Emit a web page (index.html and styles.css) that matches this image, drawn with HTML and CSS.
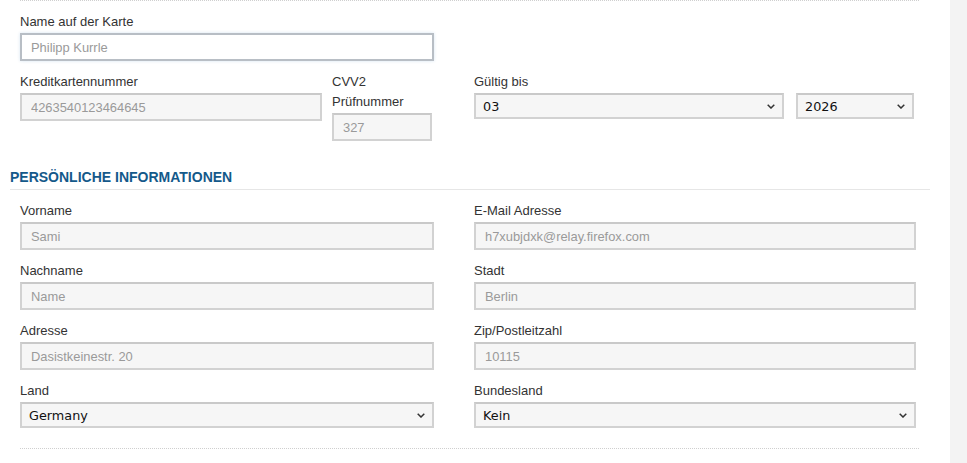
FILE: index.html
```html
<!DOCTYPE html>
<html lang="de">
<head>
<meta charset="utf-8">
<title>Zahlung</title>
<link rel="stylesheet" href="styles.css">
</head>
<body>
<div class="page">
  <main class="content">
    <section class="card-block">
      <div class="grid">
        <div class="field">
          <label class="label">Name auf der Karte</label>
          <input class="input input-focus" type="text" value="Philipp Kurrle">
        </div>
        <div></div>
        <div class="pair">
          <div class="field card-num">
            <label class="label">Kreditkartennummer</label>
            <input class="input input-ro" type="text" value="4263540123464645" readonly>
          </div>
          <div class="field cvv">
            <label class="label">CVV2 Prüfnummer</label>
            <input class="input input-ro" type="text" value="327" readonly>
          </div>
        </div>
        <div class="field">
          <label class="label">Gültig bis</label>
          <div class="selects">
            <div class="select-wrap month">
              <select class="select"><option>03</option></select>
              <svg class="chev" viewBox="0 0 8 5" width="8" height="5"><path d="M0.7 0.7 L4 4 L7.3 0.7" fill="none" stroke="#333" stroke-width="1.5"/></svg>
            </div>
            <div class="select-wrap year">
              <select class="select"><option>2026</option></select>
              <svg class="chev" viewBox="0 0 8 5" width="8" height="5"><path d="M0.7 0.7 L4 4 L7.3 0.7" fill="none" stroke="#333" stroke-width="1.5"/></svg>
            </div>
          </div>
        </div>
      </div>
    </section>

    <h2 class="section-title">PERSÖNLICHE INFORMATIONEN</h2>

    <section class="personal">
      <div class="grid">
        <div class="field">
          <label class="label">Vorname</label>
          <input class="input input-ro" type="text" value="Sami" readonly>
        </div>
        <div class="field">
          <label class="label">E-Mail Adresse</label>
          <input class="input input-ro" type="text" value="h7xubjdxk@relay.firefox.com" readonly>
        </div>
        <div class="field">
          <label class="label">Nachname</label>
          <input class="input input-ro" type="text" value="Name" readonly>
        </div>
        <div class="field">
          <label class="label">Stadt</label>
          <input class="input input-ro" type="text" value="Berlin" readonly>
        </div>
        <div class="field">
          <label class="label">Adresse</label>
          <input class="input input-ro" type="text" value="Dasistkeinestr. 20" readonly>
        </div>
        <div class="field">
          <label class="label">Zip/Postleitzahl</label>
          <input class="input input-ro" type="text" value="10115" readonly>
        </div>
        <div class="field">
          <label class="label">Land</label>
          <div class="select-wrap">
            <select class="select"><option>Germany</option></select>
            <svg class="chev" viewBox="0 0 8 5" width="8" height="5"><path d="M0.7 0.7 L4 4 L7.3 0.7" fill="none" stroke="#333" stroke-width="1.5"/></svg>
          </div>
        </div>
        <div class="field">
          <label class="label">Bundesland</label>
          <div class="select-wrap">
            <select class="select"><option>Kein</option></select>
            <svg class="chev" viewBox="0 0 8 5" width="8" height="5"><path d="M0.7 0.7 L4 4 L7.3 0.7" fill="none" stroke="#333" stroke-width="1.5"/></svg>
          </div>
        </div>
      </div>
    </section>
    <div class="bottom-rule"></div>
  </main>
  <aside class="side"></aside>
</div>
</body>
</html>
```

FILE: styles.css
```css
* { box-sizing: border-box; }

html, body {
  margin: 0;
  padding: 0;
  background: #fff;
  font-family: "Liberation Sans", Arial, sans-serif;
  color: #333;
}

.page {
  display: flex;
  min-height: 463px;
}

.content {
  width: 950px;
  flex: none;
  padding-left: 10px;
}

.side {
  flex: 1;
  background: #f3f3f3;
}

.card-block {
  margin-left: 10px;
  width: 899px;
  border-top: 1px dotted #cfcfcf;
  padding-top: 11px;
}

.grid {
  display: grid;
  grid-template-columns: 414px 442px;
  column-gap: 40px;
  row-gap: 11px;
}

.field {
  display: flex;
  flex-direction: column;
}

.label {
  display: block;
  font-size: 13px;
  line-height: 20px;
  margin-bottom: 1px;
  color: #333;
}

.input {
  display: block;
  width: 100%;
  height: 28px;
  padding: 0 9px;
  font-family: "Liberation Sans", Arial, sans-serif;
  font-size: 12.9px;
  color: #9a9a9a;
  outline: none;
}

.input-ro {
  background: #f6f6f6;
  border: 2px solid #d2d2d2;
  border-top-color: #c9c9c9;
}

.input-focus {
  background: #fff;
  border: 2px solid #b8bec5;
  box-shadow: 0 0 3px rgba(120, 165, 210, 0.3);
}

.pair {
  display: flex;
  gap: 10px;
  align-items: flex-start;
}

.card-num { width: 302px; }
.cvv { width: 100px; }

.selects {
  display: flex;
  gap: 12px;
}

.select-wrap {
  position: relative;
  width: 100%;
}

.select-wrap.month { width: 310px; }
.select-wrap.year { width: 118px; }

.select {
  display: block;
  width: 100%;
  height: 26px;
  -webkit-appearance: none;
  appearance: none;
  background: #f6f6f6;
  border: 2px solid #d2d2d2;
  border-top-color: #c9c9c9;
  border-radius: 0;
  padding: 0 24px 0 7px;
  font-family: "DejaVu Sans", Tahoma, sans-serif;
  font-size: 12.8px;
  color: #111;
  outline: none;
}

.chev {
  position: absolute;
  right: 9px;
  top: 11px;
  pointer-events: none;
}

.section-title {
  margin: 27px 0 0;
  width: 920px;
  padding-bottom: 3px;
  border-bottom: 1px solid #e6e6e6;
  font-family: "Liberation Sans", Arial, sans-serif;
  font-size: 14px;
  line-height: 18px;
  font-weight: bold;
  color: #14598a;
}

.personal {
  margin-left: 10px;
  padding-top: 11px;
}

.bottom-rule {
  margin: 20px 0 0 10px;
  width: 899px;
  border-top: 1px dotted #cfcfcf;
}
```
